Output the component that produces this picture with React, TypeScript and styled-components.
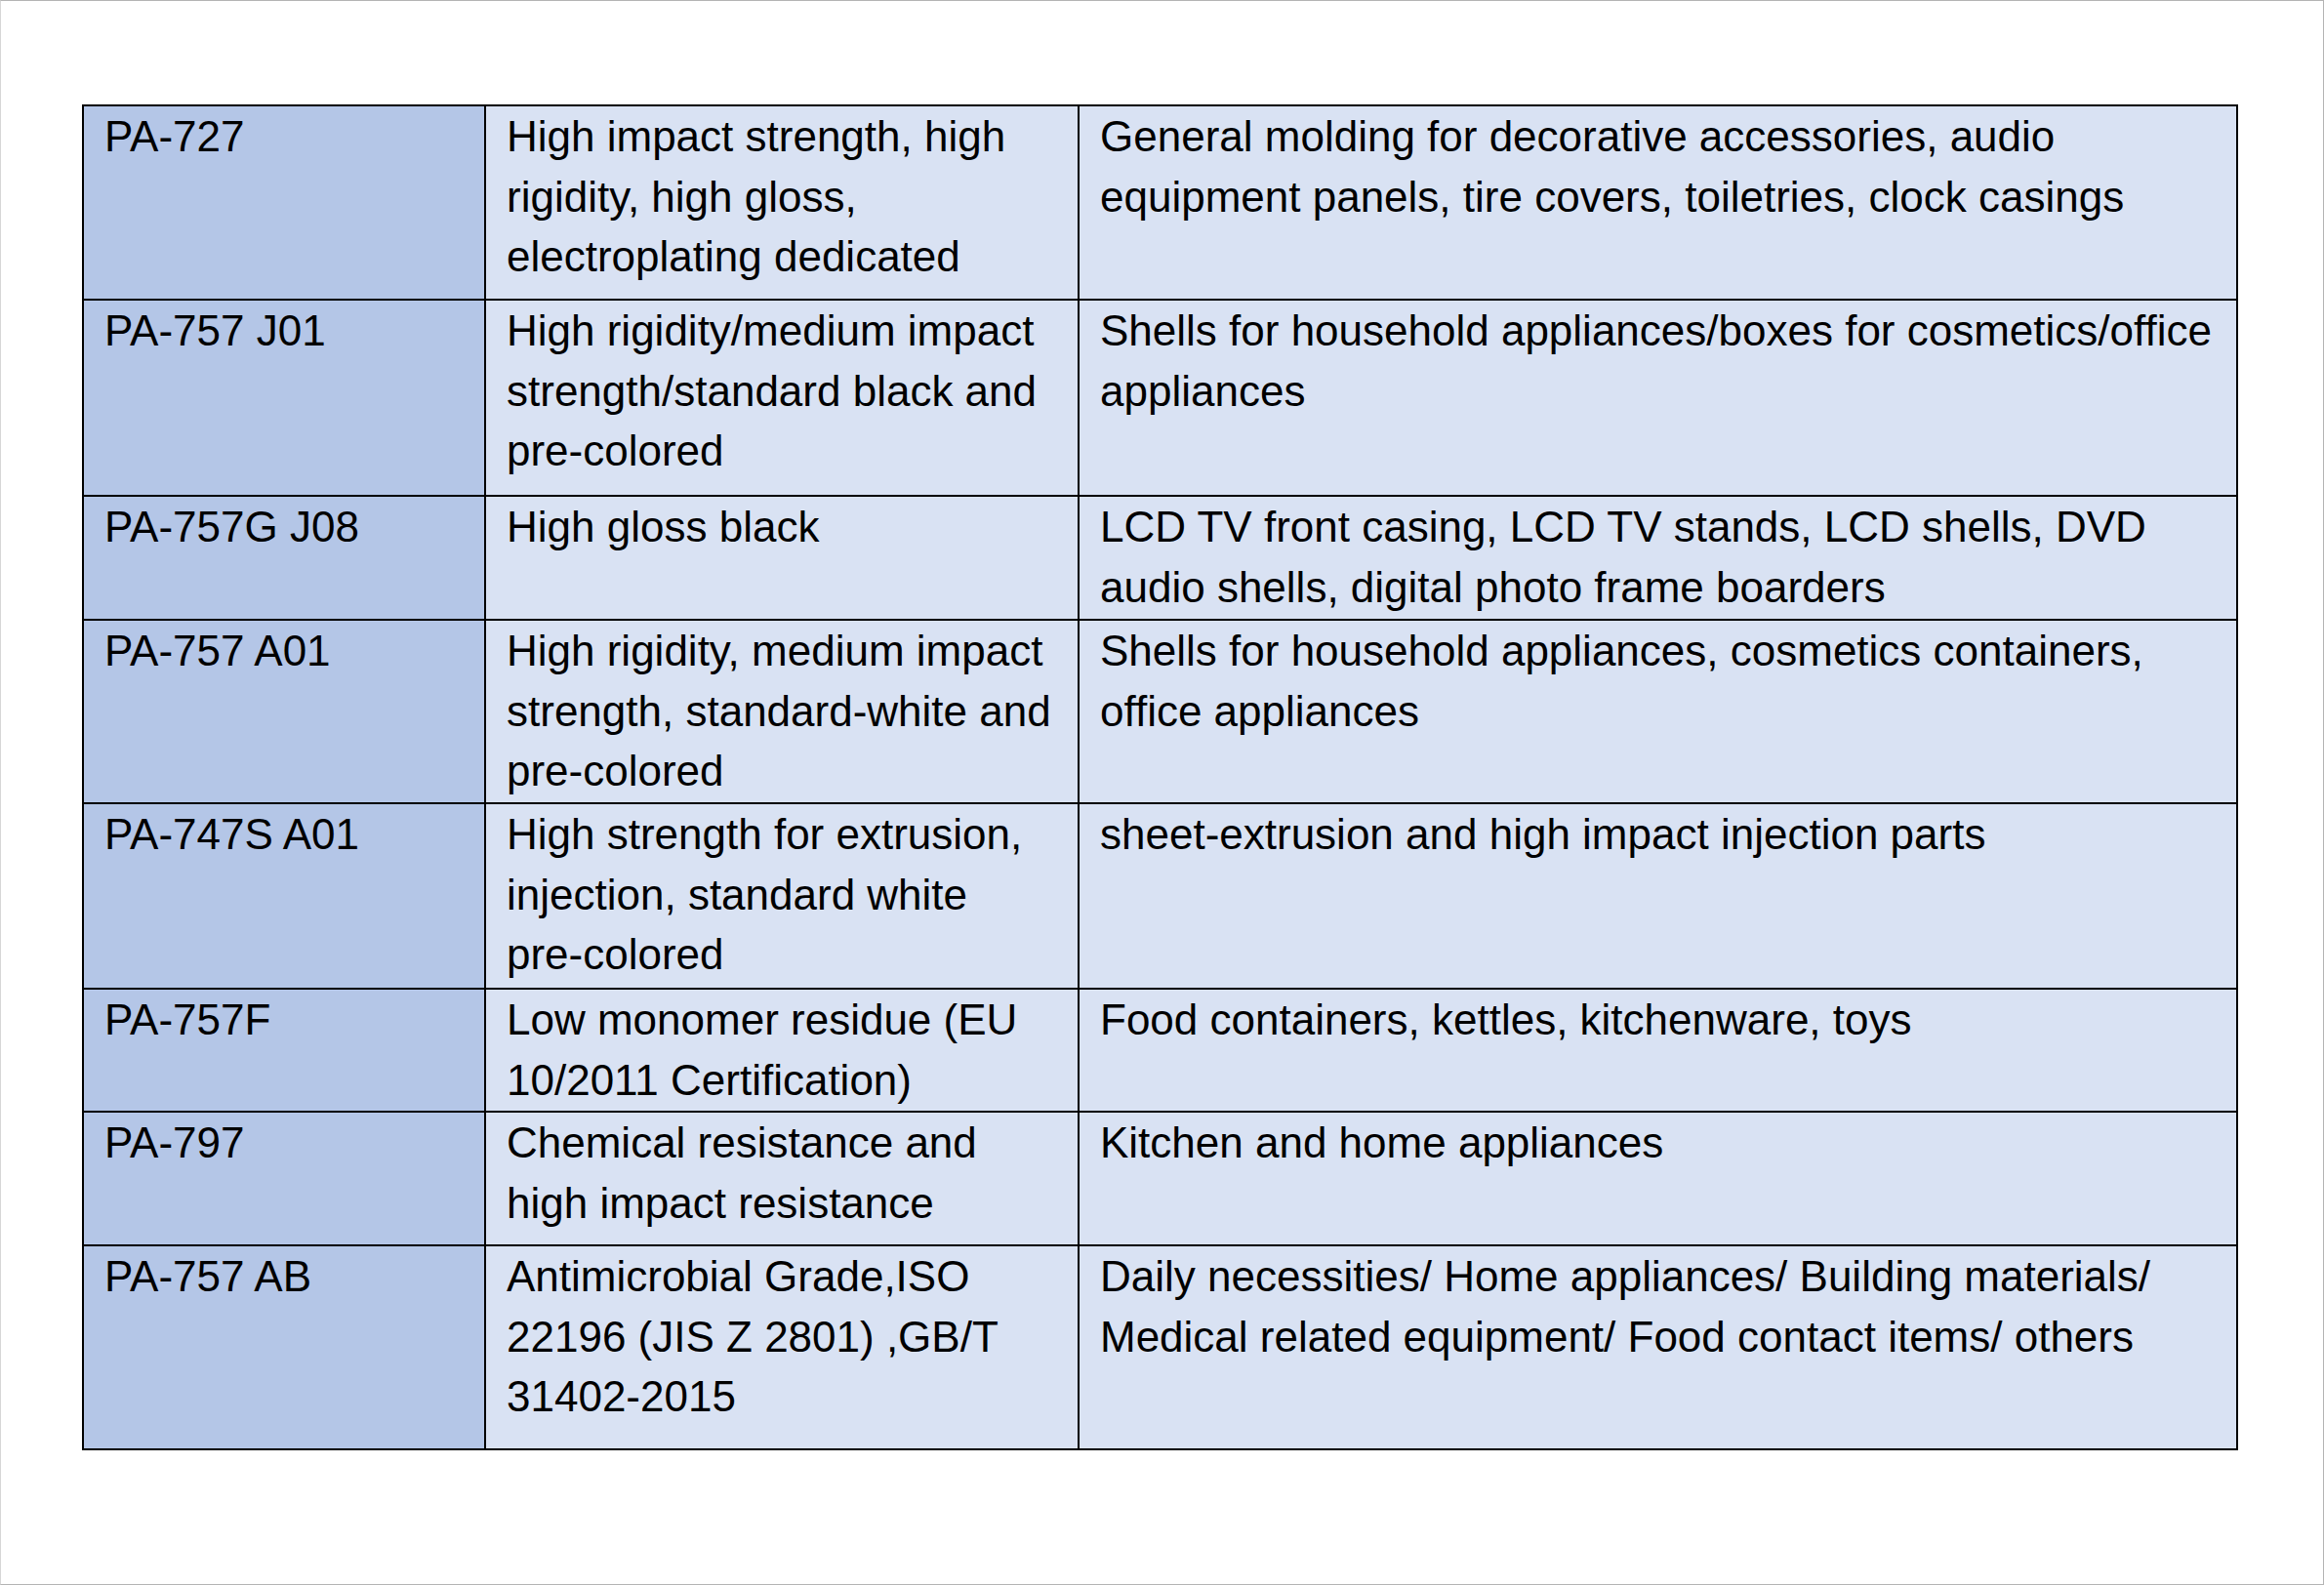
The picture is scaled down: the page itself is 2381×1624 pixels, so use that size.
import * as React from 'react';
import styled, { createGlobalStyle } from 'styled-components';

const GlobalStyle = createGlobalStyle`
  html, body {
    margin: 0;
    padding: 0;
    background: #fff;
  }
`

const Page = styled.div`
  box-sizing: border-box;
  width: 2381px;
  height: 1624px;
  border: 1px solid #b4b4b4;
  border-left-color: #d6d6d6;
  background: #fff;
  padding: 106px 0 0 83px;
  font-family: "Liberation Sans", Arial, sans-serif;
`

const Table = styled.div`
  display: grid;
  grid-template-columns: 412px 608px 1187px;
  width: fit-content;
  border-top: 2px solid #000;
  border-left: 2px solid #000;
`

const Cell = styled.div<{ $h: number; $first?: boolean }>`
  box-sizing: border-box;
  height: ${p => p.$h}px;
  border-right: 2px solid #000;
  border-bottom: 2px solid #000;
  background: ${p => (p.$first ? '#b4c6e7' : '#d9e2f3')};
  padding: 0 8px 0 21px;
  color: #000;
  font-size: 44px;
  line-height: 61.5px;
`

const Line = styled.div`
  white-space: nowrap;
`

type Row = { h: number; grade: string[]; feature: string[]; use: string[] };

const rows: Row[] = [
  {
    h: 199,
    grade: ['PA-727'],
    feature: ['High impact strength, high', 'rigidity, high gloss,', 'electroplating dedicated'],
    use: ['General molding for decorative accessories, audio', 'equipment panels, tire covers, toiletries, clock casings'],
  },
  {
    h: 201,
    grade: ['PA-757 J01'],
    feature: ['High rigidity/medium impact', 'strength/standard black and', 'pre-colored'],
    use: ['Shells for household appliances/boxes for cosmetics/office', 'appliances'],
  },
  {
    h: 127,
    grade: ['PA-757G J08'],
    feature: ['High gloss black'],
    use: ['LCD TV front casing, LCD TV stands, LCD shells, DVD', 'audio shells, digital photo frame boarders'],
  },
  {
    h: 188,
    grade: ['PA-757 A01'],
    feature: ['High rigidity, medium impact', 'strength, standard-white and', 'pre-colored'],
    use: ['Shells for household appliances, cosmetics containers,', 'office appliances'],
  },
  {
    h: 190,
    grade: ['PA-747S A01'],
    feature: ['High strength for extrusion,', 'injection, standard white', 'pre-colored'],
    use: ['sheet-extrusion and high impact injection parts'],
  },
  {
    h: 126,
    grade: ['PA-757F'],
    feature: ['Low monomer residue (EU', '10/2011 Certification)'],
    use: ['Food containers, kettles, kitchenware, toys'],
  },
  {
    h: 137,
    grade: ['PA-797'],
    feature: ['Chemical resistance and', 'high impact resistance'],
    use: ['Kitchen and home appliances'],
  },
  {
    h: 209,
    grade: ['PA-757 AB'],
    feature: ['Antimicrobial Grade,ISO', '22196 (JIS Z 2801) ,GB/T', '31402-2015'],
    use: ['Daily necessities/ Home appliances/ Building materials/', 'Medical related equipment/ Food contact items/ others'],
  },
];

const Lines = ({ lines }: { lines: string[] }) => (
  <>
    {lines.map((l, i) => (
      <Line key={i}>{l}</Line>
    ))}
  </>
);

export default function App() {
  return (
    <>
      <GlobalStyle />
      <Page>
        <Table>
          {rows.map((r, i) => (
            <React.Fragment key={i}>
              <Cell $h={r.h} $first>
                <Lines lines={r.grade} />
              </Cell>
              <Cell $h={r.h}>
                <Lines lines={r.feature} />
              </Cell>
              <Cell $h={r.h}>
                <Lines lines={r.use} />
              </Cell>
            </React.Fragment>
          ))}
        </Table>
      </Page>
    </>
  );
}
